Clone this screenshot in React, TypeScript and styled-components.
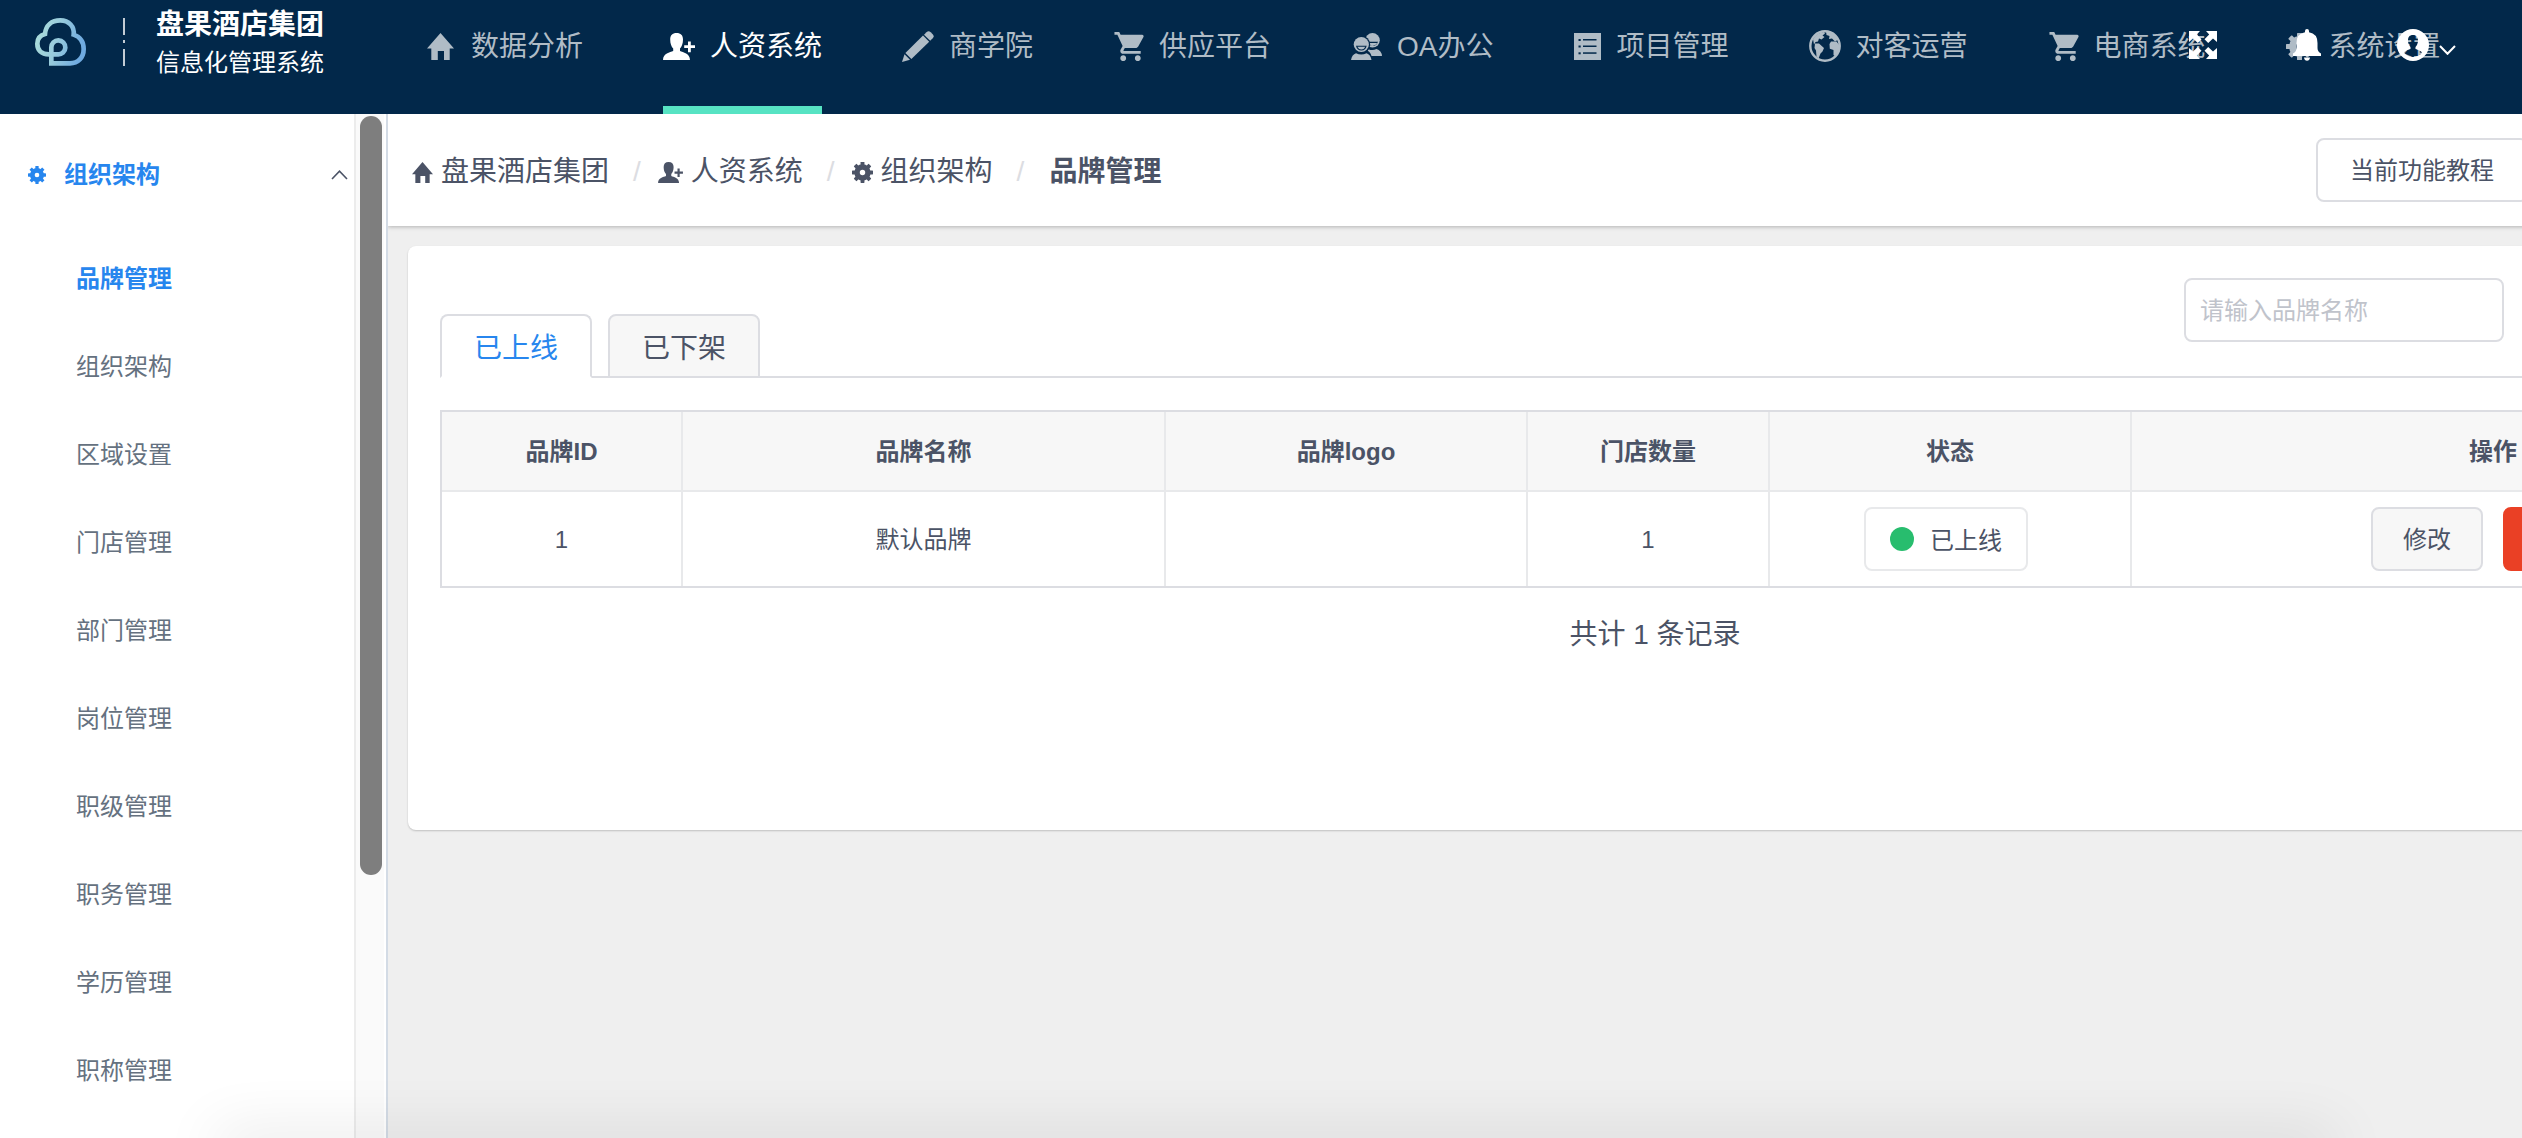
import React from 'react';
import styled, { createGlobalStyle } from 'styled-components';
import { MdShoppingCart } from 'react-icons/md';

const NAVY = '#02284a';
const BLUE = '#2786ee';
const TEXT = '#4b5366';
const LINE = '#dcdde2';
const LINE_SOFT = '#e8e9eb';
const HEADER_H = 114;

const GlobalStyle = createGlobalStyle`
  *, *::before, *::after { box-sizing: border-box; }
  body {
    margin: 0;
    background: #efefef;
    color: ${TEXT};
    font-family: "Liberation Sans", "Noto Sans CJK SC", sans-serif;
    font-size: 24px;
    line-height: 36px;
    overflow: hidden;
  }
  button, input { font: inherit; color: inherit; }
  a { color: inherit; text-decoration: none; }
  ul, ol { list-style: none; margin: 0; padding: 0; }
  svg { display: block; flex: none; }
`;

/* ---------- icons ---------- */

type IconProps = { size?: number };

const HomeIcon = ({ size = 27 }: IconProps) => (
  <svg width={size} height={size} viewBox="0 0 27 27" fill="currentColor" aria-hidden="true">
    <path d="M13.5 0 L27 15.6 H22.7 V27 H17 V18 H10.8 V27 H4.3 V15.6 H0 Z" />
  </svg>
);

const UserPlusIcon = ({ size = 27 }: IconProps) => (
  <svg width={Math.round((size * 32) / 27)} height={size} viewBox="0 0 32 27" fill="currentColor" aria-hidden="true">
    <path d="M13.5 0 C17.8 0 20 2.4 20 6.4 C20 10.5 18.7 13.6 17 15.4 V18 C20 19.6 27 20.2 27 27 H0 C0 20.2 7 19.6 10.2 18 V15.4 C8.4 13.6 7.2 10.5 7.2 6.4 C7.2 2.4 9.4 0 13.5 0 Z" />
    <path d="M25 8.4h2.8v3.8H32v2.8h-4.2v4.2H25V15h-3.800v-2.800H25z" />
  </svg>
);

const PencilIcon = () => (
  <svg width="32" height="31" viewBox="0 0 32 31" fill="currentColor" aria-hidden="true">
    <path d="M3.400 22 L21 4.600 L27.200 10.800 L9.400 28 Z" />
    <path d="M22 3.700 L24.500 1.200 Q26.600 -0.800 28.700 1.200 L30.700 3.200 Q32.600 5.200 30.700 7.200 L28.200 9.800 Z" />
    <path d="M2.500 23.300 L8 28.800 L0 31 Z" />
  </svg>
);

const PeopleIcon = () => (
  <svg width="31" height="27" viewBox="0 0 31 27" fill="currentColor" aria-hidden="true">
    <circle cx="21.500" cy="7.300" r="7.300" />
    <path d="M16 8.800 H27 Q25.500 13 21.500 13 Q18 13 16 8.800 Z" fill={NAVY} />
    <path d="M16 10 H26.300 Q24.500 13 21.500 13 Q18 13 16 10 Z" />
    <path d="M17.500 16.200 Q21.500 18 25.500 16 Q30.500 17.500 31 23 H20.500 Q19.500 19 16.500 17.800 Z" />
    <circle cx="10.300" cy="11.500" r="8.900" fill={NAVY} />
    <circle cx="10.300" cy="11.500" r="7.600" />
    <path d="M5 12.800 H15.700 Q14.700 17.500 10.300 17.500 Q6 17.500 5 12.800 Z" fill={NAVY} />
    <path d="M6.300 13.800 H14.400 Q13.200 16.500 10.300 16.500 Q7.500 16.500 6.300 13.800 Z" />
    <path d="M0 27 Q1 21.500 5 20.200 Q10.300 22.600 15.600 20.200 Q19.500 21.500 20.500 27 Z" />
  </svg>
);

const ListIcon = () => (
  <svg width="27" height="27" viewBox="0 0 27 27" aria-hidden="true">
    <rect width="27" height="27" fill="currentColor" />
    <g fill={NAVY}>
      {[6, 12.5, 19.3].map((y) => (
        <React.Fragment key={y}>
          <rect x="4.5" y={y} width="2.2" height="2" />
          <rect x="9" y={y} width="13.5" height="1.5" />
        </React.Fragment>
      ))}
    </g>
  </svg>
);

const GlobeIcon = () => (
  <svg width="32" height="32" viewBox="0 0 32 32" aria-hidden="true">
    <circle cx="16" cy="16" r="14.7" fill="none" stroke="currentColor" strokeWidth="2.4" />
    <g fill="currentColor">
      <path d="M4 9 Q8 2.500 15 2 L16 3.500 L13.500 5.500 L15.500 7 L12.500 9.500 L10 8.500 L9 11.500 L6.500 12 L5 14.500 Z" />
      <path d="M17 1 Q26 2 29.500 9.500 L26 11.500 L23 8.500 L20 9 L20.500 6 L17.500 5 Z" />
      <path d="M6 13.500 L10 13.500 L15 18 L13.500 21.500 L11.500 23.500 L9.500 28.500 L7.500 26.500 L7 20.500 L5.500 18 Z" />
      <path d="M22 11.500 L27.500 11.500 L31 16 L29.500 21.500 L26.500 26.500 L24.500 25 L24.500 20 L20.800 18.800 L20.500 14 Z" />
    </g>
  </svg>
);

const GearIcon = ({ size = 27 }: IconProps) => (
  <svg width={size} height={size} viewBox="0 0 27 27" fill="currentColor" aria-hidden="true">
    <circle cx="13.5" cy="13.5" r="7" fill="none" stroke="currentColor" strokeWidth="7" />
    {[0, 45, 90, 135, 180, 225, 270, 315].map((a) => (
      <rect key={a} x="11" y="0" width="5" height="6" rx="0.6" transform={`rotate(${a} 13.5 13.5)`} />
    ))}
  </svg>
);

const FullscreenIcon = () => (
  <svg width="28" height="28" viewBox="0 0 28 28" fill="currentColor" aria-hidden="true">
    {['', 'matrix(-1 0 0 1 28 0)', 'matrix(1 0 0 -1 0 28)', 'matrix(-1 0 0 -1 28 28)'].map((t) => (
      <path key={t} transform={t} d="M0 0 H11 L7.800 3.600 L12.500 8.300 L8.800 12 L4 7.400 L0 11 Z" />
    ))}
  </svg>
);

const BellIcon = () => (
  <svg width="28" height="32" viewBox="0 0 28 32" fill="currentColor" aria-hidden="true">
    <path d="M12 2 Q12 0 14 0 Q16 0 16 2 V3.200 Q24.500 4.500 24.500 14 V19 Q24.500 22.500 28 24.500 V27 H0 V24.500 Q3.500 22.500 3.500 19 V14 Q3.500 4.500 12 3.200 Z" />
    <path d="M11 28.600 H17 Q16.500 31.800 14 31.800 Q11.500 31.800 11 28.600 Z" />
  </svg>
);

const AvatarIcon = () => (
  <svg width="32" height="32" viewBox="0 0 32 32" fill="currentColor" aria-hidden="true">
    <path
      fillRule="evenodd"
      d="M16 0 A16 16 0 1 1 16 32 A16 16 0 1 1 16 0 Z M16 6 C12.500 6 11 8.200 11 11.500 C11 14.500 12 16.500 13.500 18 V20 C11 21 7.500 21.500 7 24 Q11 28 16 28 Q21 28 25 24 C24.500 21.500 21 21 18.500 20 V18 C20 16.500 21 14.500 21 11.500 C21 8.200 19.500 6 16 6 Z"
    />
  </svg>
);

const Chevron = ({ up = false }: { up?: boolean }) => (
  <svg width="17" height="10" viewBox="0 0 17 10" fill="none" stroke="currentColor" strokeWidth={up ? 1.6 : 2} aria-hidden="true">
    <path d={up ? 'M1 9 L8.500 1.200 L16 9' : 'M1 1 L8.500 8.800 L16 1'} />
  </svg>
);

const LogoMark = () => (
  <svg width="51" height="48" viewBox="0 0 153 144" fill="none" role="img" aria-label="盘果">
    <defs>
      <linearGradient id="logoTint" x1="0" y1="0" x2="153" y2="40" gradientUnits="userSpaceOnUse">
        <stop offset="0" stopColor="#aee0da" />
        <stop offset="0.5" stopColor="#98cbdc" />
        <stop offset="1" stopColor="#6faae0" />
      </linearGradient>
    </defs>
    <path
      d="M49 136 V88 A21 21 0 1 1 69 109 H42 C18 109 7 96 7 77 C7 62 15 52 30 48 C32 22 50 7 76 7 C102 7 119 26 116 50 C136 57 146 73 146 93 C146 119 129 136 105 136 Z"
      stroke="url(#logoTint)"
      strokeWidth="14"
    />
  </svg>
);

/* ---------- header ---------- */

const Header = styled.header`
  position: relative;
  display: flex;
  height: ${HEADER_H}px;
  padding-bottom: 24px;
  background: ${NAVY};
  color: #fff;
  white-space: nowrap;
  overflow: hidden;
`;

const Brand = styled.div`
  display: flex;
  align-items: center;
  flex: none;
  width: 427px;
  height: 84px;
  padding-left: 35px;
`;

const BrandRule = styled.span`
  width: 2px;
  height: 48px;
  margin: 0 31px 0 37px;
  background: linear-gradient(#c3ccd4 0 17px, transparent 17px 22px, #c3ccd4 22px 25px, transparent 25px 31px, #c3ccd4 31px);
`;

const BrandText = styled.div`
  padding-top: 4px;
`;

const BrandTitle = styled.h1`
  margin: 0;
  font-size: 28px;
  line-height: 38px;
  font-weight: 700;
`;

const BrandSub = styled.p`
  margin: 0;
  font-size: 24px;
  line-height: 38px;
`;

const NavList = styled.ul`
  display: flex;
  gap: 80px;
`;

const NavLink = styled.a<{ $active?: boolean }>`
  display: flex;
  align-items: center;
  height: ${HEADER_H}px;
  padding-bottom: 12px;
  border-bottom: 8px solid ${(p) => (p.$active ? '#57e3c3' : 'transparent')};
  color: ${(p) => (p.$active ? '#fff' : '#b0bcc6')};
  font-size: 28px;
  line-height: 40px;
`;

const NavIcon = styled.span<{ $w: number }>`
  display: flex;
  width: ${(p) => p.$w}px;
  margin-right: 12px;
  padding-bottom: 2px;
`;

const Tools = styled.div`
  position: absolute;
  top: 0;
  right: 66px;
  display: flex;
  align-items: center;
  gap: 76px;
  height: 90px;
`;

const ToolButton = styled.button`
  display: flex;
  align-items: center;
  gap: 10px;
  padding: 0;
  border: 0;
  background: none;
  color: #fff;

  svg + svg { margin-top: 10px; }
`;

/* ---------- sidebar ---------- */

const Body = styled.div`
  display: flex;
  height: calc(100vh - ${HEADER_H}px);
`;

const Sidebar = styled.aside`
  display: flex;
  flex: none;
  width: 388px;
  padding-right: 2px;
  background: #fff;
  border-right: 2px solid #d3dbe5;
`;

const Menu = styled.nav`
  flex: 1;
  overflow: hidden;
`;

const MenuHead = styled.button`
  display: flex;
  align-items: center;
  width: 100%;
  height: 121px;
  padding: 0 6px 0 28px;
  border: 0;
  background: none;
  color: ${BLUE};
  font-weight: 700;
  text-align: left;

  span { flex: 1; margin-left: 18px; }
  svg:last-child { color: ${TEXT}; }
`;

const MenuLink = styled.a<{ $active?: boolean }>`
  display: block;
  padding-left: 76px;
  line-height: 88px;
  color: ${(p) => (p.$active ? BLUE : '#657180')};
  font-weight: ${(p) => (p.$active ? 700 : 400)};
`;

const ScrollTrack = styled.div`
  width: 30px;
  padding: 2px 2px 2px 4px;
  border-left: 2px solid #ececec;
  background: #fafafa;
`;

const ScrollThumb = styled.div`
  width: 22px;
  height: 74.4%;
  border-radius: 11px;
  background: #7e7e7e;
`;

/* ---------- main area ---------- */

const Main = styled.main`
  flex: 1;
  min-width: 0;
  overflow: auto;
  scrollbar-width: none;
`;

const CrumbBar = styled.div`
  display: flex;
  align-items: center;
  justify-content: space-between;
  width: calc(100% + 6px);
  height: 112px;
  padding-left: 24px;
  background: #fff;
  box-shadow: 0 1px 4px rgba(0, 0, 0, 0.25);
`;

const Crumbs = styled.ol`
  display: flex;
  padding-top: 4px;
  font-size: 28px;
  line-height: 40px;

  li { display: flex; align-items: center; }
  li + li::before {
    content: "/";
    margin: 0 17px 0 24px;
    color: ${LINE};
  }
`;

const CrumbLink = styled.a`
  display: flex;
  align-items: center;
  gap: 8px;
`;

const CrumbCurrent = styled.strong`
  margin-left: 8px;
`;

const Button = styled.button<{ $tone?: 'plain' | 'soft' | 'danger' }>`
  height: 64px;
  min-width: 112px;
  padding: 2px 30px 0;
  border: 2px solid ${(p) => (p.$tone === 'danger' ? '#ea4025' : LINE)};
  border-radius: 8px;
  background: ${(p) => (p.$tone === 'danger' ? '#ea4025' : p.$tone === 'soft' ? '#f7f7f7' : '#fff')};
  color: ${(p) => (p.$tone === 'danger' ? '#fff' : TEXT)};
  white-space: nowrap;
`;

const HelpButton = styled(Button)`
  padding: 2px 32px 0;
`;

const Card = styled.section`
  width: max-content;
  min-width: calc(100% - 40px);
  margin: 20px;
  padding: 32px 32px 174px;
  border-radius: 8px;
  background: #fff;
  box-shadow: 0 1px 2px rgba(0, 0, 0, 0.2);
`;

const Toolbar = styled.div`
  display: flex;
  justify-content: space-between;
  height: 100px;
  border-bottom: 2px solid ${LINE};
`;

const Tabs = styled.div`
  display: flex;
  align-items: flex-end;
  gap: 16px;
  margin-bottom: -2px;
`;

const Tab = styled.button<{ $active?: boolean }>`
  height: 64px;
  padding: 6px 32px 0;
  border: 2px solid ${LINE};
  border-bottom-color: ${(p) => (p.$active ? '#fff' : LINE)};
  border-radius: 8px 8px 0 0;
  background: ${(p) => (p.$active ? '#fff' : '#f7f7f7')};
  color: ${(p) => (p.$active ? BLUE : TEXT)};
  font-size: 28px;
`;

const SearchInput = styled.input`
  position: sticky;
  right: 18px;
  width: 320px;
  height: 64px;
  padding: 2px 14px 0;
  border: 2px solid ${LINE};
  border-radius: 8px;
  background: #fff;

  &::placeholder { color: #c0c3cb; }
`;

const Table = styled.table`
  width: 100%;
  margin-top: 32px;
  border-collapse: separate;
  border-spacing: 0;
  border: 2px solid ${LINE};
  border-right: 0;
  text-align: center;

  th, td { padding: 2px 0 0; border-right: 2px solid ${LINE_SOFT}; }
  th { height: 80px; background: #f7f7f7; border-bottom: 2px solid ${LINE_SOFT}; font-weight: 700; }
  td { height: 94px; }
`;

const Col = styled.col<{ $w: number }>`
  width: ${(p) => p.$w}px;
`;

const StatusTag = styled.span`
  display: inline-flex;
  align-items: center;
  gap: 16px;
  height: 64px;
  margin: 0 8px 2px 0;
  padding: 0 24px;
  border: 2px solid ${LINE_SOFT};
  border-radius: 8px;
  vertical-align: middle;

  &::before {
    content: "";
    width: 24px;
    height: 24px;
    border-radius: 50%;
    background: #28bd6e;
  }
`;

const StatusLabel = styled.span`
  padding-top: 4px;
`;

const Actions = styled.div`
  display: flex;
  justify-content: center;
  gap: 20px;
  padding-bottom: 2px;
`;

const Total = styled.p`
  margin: 26px 0 0;
  padding-left: 14px;
  font-size: 28px;
  line-height: 42px;
  text-align: center;
`;

const BottomShade = styled.div`
  position: fixed;
  left: 220px;
  right: 190px;
  bottom: -20px;
  height: 20px;
  box-shadow: 0 0 60px 4px rgba(0, 0, 0, 0.12);
  pointer-events: none;
`;

/* ---------- data ---------- */

const NAV = [
  { label: '数据分析', icon: <HomeIcon />, w: 32 },
  { label: '人资系统', icon: <UserPlusIcon />, w: 35, active: true },
  { label: '商学院', icon: <PencilIcon />, w: 35 },
  { label: '供应平台', icon: <MdShoppingCart size={35} />, w: 34 },
  { label: 'OA办公', icon: <PeopleIcon />, w: 34 },
  { label: '项目管理', icon: <ListIcon />, w: 31 },
  { label: '对客运营', icon: <GlobeIcon />, w: 35 },
  { label: '电商系统', icon: <MdShoppingCart size={35} />, w: 34 },
  { label: '系统设置', icon: <GearIcon />, w: 31 },
];

const MENU = ['品牌管理', '组织架构', '区域设置', '门店管理', '部门管理', '岗位管理', '职级管理', '职务管理', '学历管理', '职称管理'];

const CRUMBS = [
  { label: '盘果酒店集团', icon: <HomeIcon size={21} /> },
  { label: '人资系统', icon: <UserPlusIcon size={21} /> },
  { label: '组织架构', icon: <GearIcon size={21} /> },
];

const COLUMNS = [
  { title: '品牌ID', width: 241 },
  { title: '品牌名称', width: 483 },
  { title: '品牌logo', width: 362 },
  { title: '门店数量', width: 242 },
  { title: '状态', width: 362 },
  { title: '操作', width: 724 },
];

export default function App() {
  return (
    <>
      <GlobalStyle />
      <Header>
        <Brand>
          <LogoMark />
          <BrandRule />
          <BrandText>
            <BrandTitle>盘果酒店集团</BrandTitle>
            <BrandSub>信息化管理系统</BrandSub>
          </BrandText>
        </Brand>
        <nav>
          <NavList>
            {NAV.map((n) => (
              <li key={n.label}>
                <NavLink href="#" $active={n.active}>
                  <NavIcon $w={n.w}>{n.icon}</NavIcon>
                  {n.label}
                </NavLink>
              </li>
            ))}
          </NavList>
        </nav>
        <Tools>
          <ToolButton aria-label="全屏"><FullscreenIcon /></ToolButton>
          <ToolButton aria-label="通知"><BellIcon /></ToolButton>
          <ToolButton aria-label="账户"><AvatarIcon /><Chevron /></ToolButton>
        </Tools>
      </Header>
      <Body>
        <Sidebar>
          <Menu>
            <MenuHead aria-expanded="true">
              <GearIcon size={18} />
              <span>组织架构</span>
              <Chevron up />
            </MenuHead>
            <ul>
              {MENU.map((label, i) => (
                <li key={label}>
                  <MenuLink href="#" $active={i === 0}>{label}</MenuLink>
                </li>
              ))}
            </ul>
          </Menu>
          <ScrollTrack><ScrollThumb /></ScrollTrack>
        </Sidebar>
        <Main>
          <CrumbBar>
            <Crumbs>
              {CRUMBS.map((c) => (
                <li key={c.label}>
                  <CrumbLink href="#">{c.icon}{c.label}</CrumbLink>
                </li>
              ))}
              <li><CrumbCurrent>品牌管理</CrumbCurrent></li>
            </Crumbs>
            <HelpButton>当前功能教程</HelpButton>
          </CrumbBar>
          <Card>
            <Toolbar>
              <Tabs role="tablist">
                <Tab role="tab" aria-selected="true" $active>已上线</Tab>
                <Tab role="tab" aria-selected="false">已下架</Tab>
              </Tabs>
              <SearchInput type="text" aria-label="品牌名称" placeholder="请输入品牌名称" />
            </Toolbar>
            <Table>
              <colgroup>
                {COLUMNS.map((c) => <Col key={c.title} $w={c.width} />)}
              </colgroup>
              <thead>
                <tr>{COLUMNS.map((c) => <th key={c.title} scope="col">{c.title}</th>)}</tr>
              </thead>
              <tbody>
                <tr>
                  <td>1</td>
                  <td>默认品牌</td>
                  <td />
                  <td>1</td>
                  <td><StatusTag><StatusLabel>已上线</StatusLabel></StatusTag></td>
                  <td>
                    <Actions>
                      <Button $tone="soft">修改</Button>
                      <Button $tone="danger" aria-label="下架" />
                    </Actions>
                  </td>
                </tr>
              </tbody>
            </Table>
            <Total>共计 1 条记录</Total>
          </Card>
        </Main>
      </Body>
      <BottomShade />
    </>
  );
}
